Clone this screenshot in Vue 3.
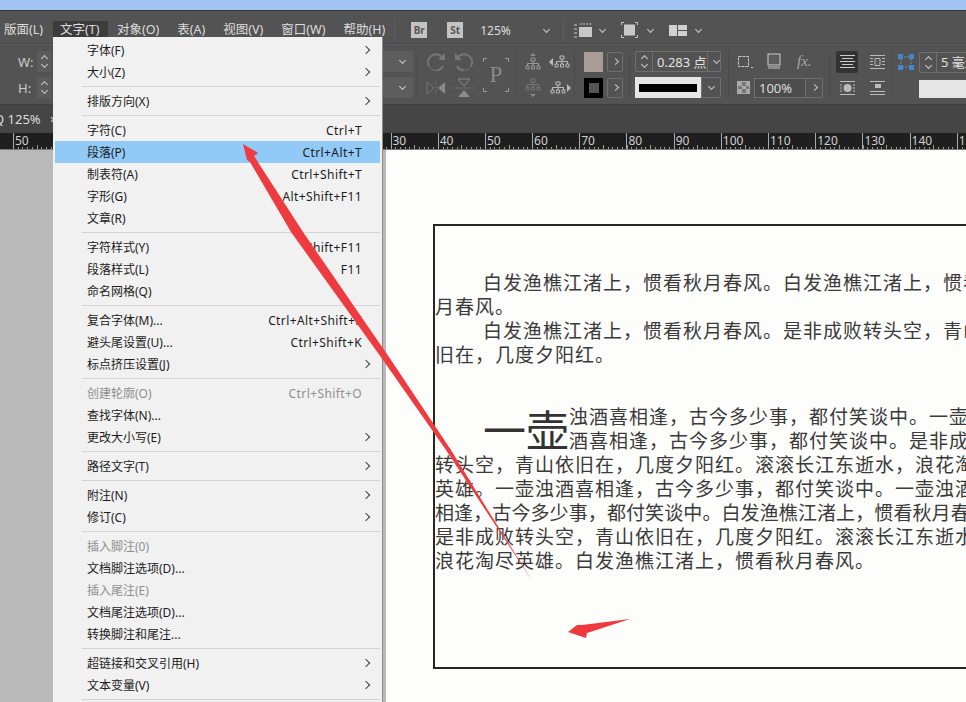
<template>
  <div class="app">
    <div class="title-strip"></div>

    <div class="menubar">
      <span class="mb-item first">版面(L)</span>
      <span class="mb-item active">文字(T)</span>
      <span class="mb-item">对象(O)</span>
      <span class="mb-item">表(A)</span>
      <span class="mb-item">视图(V)</span>
      <span class="mb-item">窗口(W)</span>
      <span class="mb-item">帮助(H)</span>
      <i class="vline bar-sep"></i>
      <span class="badge br">Br</span>
      <span class="badge st">St</span>
      <span class="zoom-val">125%</span>
      <i class="chev zoom-chev"></i>
      <i class="vline bar-sep2"></i>
      <svg class="bar-ic" width="20" height="16" viewBox="0 0 20 16">
        <rect x="6" y="5" width="13" height="10" fill="#c8c8c8" />
        <path d="M1 3h3M1 7h3M1 11h3M1 15h3M8 1v2M11 1v2M14 1v2M17 1v2" stroke="#c8c8c8" fill="none" />
      </svg>
      <i class="chev"></i>
      <svg class="bar-ic gap-a" width="17" height="16" viewBox="0 0 17 16">
        <rect x="3" y="2.500" width="11" height="11" fill="#c8c8c8" />
        <path d="M.5 3V.5H3M14 .5h2.500V3M.5 13v2.500H3M14 15.500h2.500V13" stroke="#c8c8c8" fill="none" />
      </svg>
      <i class="chev"></i>
      <svg class="bar-ic gap-b" width="18" height="13" viewBox="0 0 18 13">
        <rect x="0" y="1" width="8" height="11" fill="#d0d0d0" />
        <rect x="9" y="1" width="9" height="5" fill="#d0d0d0" />
        <rect x="9" y="7" width="9" height="5" fill="#d0d0d0" />
      </svg>
      <i class="chev"></i>
    </div>

    <div class="panel">
      <div class="grp g-left">
        <div class="wh-row"><span class="wh">W:</span><span class="spin"><i class="chev up"></i><i class="chev"></i></span></div>
        <div class="wh-row"><span class="wh">H:</span><span class="spin"><i class="chev up"></i><i class="chev"></i></span></div>
      </div>

      <div class="grp g-dd">
        <span class="dd-chip"><i class="chev"></i></span>
        <span class="dd-chip"><i class="chev"></i></span>
      </div>
      <i class="vline psep"></i>

      <div class="grp g-rot">
        <svg width="24" height="20" viewBox="0 0 24 20" class="ic">
          <path d="M18 5a8 8 0 1 0 1 9" fill="none" stroke="#777" stroke-width="2" stroke-dasharray="24 2 1 1 1 1 1 1" />
          <path d="M21 1v7h-7z" fill="#777" />
        </svg>
        <svg width="24" height="20" viewBox="0 0 24 20" class="ic">
          <path d="M6 5a8 8 0 1 1-1 9" fill="none" stroke="#777" stroke-width="2" stroke-dasharray="24 2 1 1 1 1 1 1" />
          <path d="M3 1v7h7z" fill="#777" />
        </svg>
        <svg width="20" height="16" viewBox="0 0 20 16" class="ic">
          <path d="M1 2l7 6-7 6z" fill="none" stroke="#777" />
          <path d="M19 2l-7 6 7 6z" fill="#8a8a8a" />
          <path d="M10 1v14" stroke="#777" stroke-dasharray="1 1" />
        </svg>
        <svg width="20" height="20" viewBox="0 0 20 20" class="ic">
          <path d="M4 1h12l-6 7z" fill="none" stroke="#8a8a8a" />
          <path d="M4 19h12l-6-7z" fill="#8a8a8a" />
          <path d="M0 10h20" stroke="#888" stroke-dasharray="1 1" />
        </svg>
      </div>

      <div class="grp g-proxy">
        <span class="proxy"><i class="cn tl"></i><i class="cn tr"></i><i class="cn bl"></i><i class="cn br2"></i>P</span>
      </div>
      <i class="vline psep"></i>

      <div class="grp g-org">
        <svg width="16" height="20" viewBox="0 0 16 20" class="ic">
          <path d="M5 4l3-3 3 3z" fill="#888" />
          <path d="M6 6h4v3H6zM1 14h3v3H1zM6.500 14h3v3h-3zM12 14h3v3h-3zM8 9v5M2.500 14v-2.500h11V14" fill="none" stroke="#999" />
        </svg>
        <svg width="24" height="16" viewBox="0 0 24 16" class="ic">
          <path d="M1 8l4-4v8z" fill="#bbb" />
          <path d="M12 2h4v3h-4zM7 10h3v3H7zM12.500 10h3v3h-3zM18 10h3v3h-3zM14 5v5M8.500 10V7.500h11V10" fill="none" stroke="#bbb" />
        </svg>
        <svg width="16" height="20" viewBox="0 0 16 20" class="ic">
          <path d="M5 16l3 3 3-3z" fill="#888" />
          <path d="M6 1h4v3H6zM1 9h3v3H1zM6.500 9h3v3h-3zM12 9h3v3h-3zM8 4v5M2.500 9V6.500h11V9" fill="none" stroke="#777" />
        </svg>
        <svg width="24" height="16" viewBox="0 0 24 16" class="ic">
          <path d="M23 8l-4-4v8z" fill="#bbb" />
          <path d="M8 2h4v3H8zM3 10h3v3H3zM8.500 10h3v3h-3zM14 10h3v3h-3zM10 5v5M4.500 10V7.500h11V10" fill="none" stroke="#bbb" />
        </svg>
      </div>
      <i class="vline psep"></i>

      <div class="grp g-swatch">
        <span class="sw fill"></span>
        <span class="arrow-btn"><i class="chev right"></i></span>
        <span class="sw stroke"><i></i></span>
        <span class="arrow-btn"><i class="chev right"></i></span>
      </div>
      <i class="vline psep"></i>

      <div class="grp g-stroke">
        <div class="field">
          <span class="spin-box"><i class="chev up"></i><i class="chev"></i></span>
          <span class="field-val">0.283 点</span>
          <span class="field-end"><i class="chev"></i></span>
        </div>
        <div class="field plain">
          <span class="line-sample"><i></i></span>
          <span class="field-end"><i class="chev"></i></span>
        </div>
      </div>
      <i class="vline psep"></i>

      <div class="grp g-fx">
        <div class="fx-row">
          <svg width="16" height="14" viewBox="0 0 16 14">
            <rect x="1.500" y="1.500" width="10" height="10" fill="none" stroke="#ccc" stroke-dasharray="3 1" />
            <path d="M14 12h2v1h-2z" fill="#ccc" />
          </svg>
          <svg class="fx-gap" width="14" height="17" viewBox="0 0 14 17">
            <rect x="1" y="1" width="12" height="11" fill="#5c5c5c" stroke="#ccc" />
            <rect x="1" y="12" width="12" height="4" fill="#8b8b8b" />
          </svg>
          <span class="fx-text">fx.</span>
        </div>
        <div class="fx-row second">
          <svg width="13" height="13" viewBox="0 0 13 13">
            <rect x=".5" y=".5" width="12" height="12" fill="#777" stroke="#aaa" />
            <path d="M1 1h4v4H1zM9 1h3v4H9zM5 5h4v3H5zM1 8h4v4H1zM9 8h3v4H9z" fill="#aaa" />
          </svg>
          <span class="pct">100%</span>
          <span class="arrow-btn joined"><i class="chev right"></i></span>
        </div>
      </div>
      <i class="vline psep"></i>

      <div class="grp g-align">
        <span class="al-cell on">
          <svg width="15" height="14" viewBox="0 0 15 14"><path d="M0 .5h15M2 3.500h11M0 6.500h15M2 9.500h11M0 12.500h15" stroke="#ccc" fill="none" /></svg>
        </span>
        <span class="al-cell">
          <svg width="15" height="14" viewBox="0 0 15 14"><path d="M0 .5h15M0 13.500h15M5 3.500h5v7H5zM0 3.500h3M0 6.500h3M0 9.500h3M12 3.500h3M12 6.500h3M12 9.500h3" stroke="#bbb" fill="none" /></svg>
        </span>
        <span class="al-cell">
          <svg width="15" height="14" viewBox="0 0 15 14"><circle cx="7.500" cy="7" r="4" fill="#bbb" /><path d="M0 .5h15M0 13.500h15M0 4h2M13 4h2M0 7h2M13 7h2M0 10h2M13 10h2" stroke="#bbb" fill="none" /></svg>
        </span>
        <span class="al-cell">
          <svg width="15" height="14" viewBox="0 0 15 14"><path d="M0 .5h15M0 13.500h15M0 10.500h15" stroke="#bbb" fill="none" /><rect x="5" y="3" width="6" height="4" fill="#bbb" /></svg>
        </span>
      </div>
      <i class="vline psep"></i>

      <div class="grp g-wrap">
        <div class="wrap-row">
          <svg width="16" height="16" viewBox="0 0 16 16">
            <path d="M3 3h10v10H3z" fill="none" stroke="#888" stroke-dasharray="2 1" />
            <path d="M0 0h5v5H0zM11 0h5v5h-5zM0 11h5v5H0zM11 11h5v5h-5z" fill="#3f86d6" />
          </svg>
          <div class="field open">
            <span class="spin-box"><i class="chev up"></i><i class="chev"></i></span>
            <span class="field-val">5 毫米</span>
          </div>
        </div>
        <span class="wrap-sample"></span>
      </div>
    </div>

    <div class="tabstrip">
      <span class="tab">Q 125%<em>×</em></span>
    </div>

    <div class="ruler">
      <span v-for="(n, i) in rulerMarks" :key="i" class="tick-cell">{{ n }}</span>
    </div>

    <div class="canvas">
      <div class="pasteboard"></div>
      <div class="board">
        <div class="frame">
          <p class="ln indent">白发渔樵江渚上，惯看秋月春风。白发渔樵江渚上，惯看秋</p>
          <p class="ln">月春风。</p>
          <p class="ln indent">白发渔樵江渚上，惯看秋月春风。是非成败转头空，青山依</p>
          <p class="ln">旧在，几度夕阳红。</p>
          <div class="drop">
            <span class="cap">一壶</span>
            <div>
              <p class="ln">浊酒喜相逢，古今多少事，都付笑谈中。一壶浊</p>
              <p class="ln">酒喜相逢，古今多少事，都付笑谈中。是非成败</p>
            </div>
          </div>
          <p class="ln">转头空，青山依旧在，几度夕阳红。滚滚长江东逝水，浪花淘尽</p>
          <p class="ln">英雄。一壶浊酒喜相逢，古今多少事，都付笑谈中。一壶浊酒喜</p>
          <p class="ln tight">相逢，古今多少事，都付笑谈中。白发渔樵江渚上，惯看秋月春</p>
          <p class="ln">是非成败转头空，青山依旧在，几度夕阳红。滚滚长江东逝水，</p>
          <p class="ln">浪花淘尽英雄。白发渔樵江渚上，惯看秋月春风。</p>
        </div>
      </div>
    </div>

    <!-- 下拉菜单 -->
    <div class="menu">
      <template v-for="(group, g) in menuGroups" :key="g">
        <div
          v-for="item in group"
          :key="item.label"
          class="menu-item"
          :class="{ hover: item.hover, off: item.off }"
        >
          <span>{{ item.label }}</span>
          <span class="keys">{{ item.keys }}</span>
          <i v-if="item.sub" class="chev right dark"></i>
        </div>
        <div class="menu-sep"></div>
      </template>
    </div>

    <!-- 标注箭头 -->
    <svg class="marks" width="966" height="702" viewBox="0 0 966 702">
      <polygon
        fill="#ee3b40"
        points="243,144 258,153 254,156 303,232 391,360 451,450 494,520 533,582 492,520 446,450 383,360 291,232 250,162 247,160"
      />
      <polygon fill="#f0393c" points="630,619 582,625 577,625 568,632 586,638 587,633" />
    </svg>
  </div>
</template>

<script setup>
const rulerMarks = [50, 40, 30, 20, 10, 0, 10, 20, 30, 40, 50, 60, 70, 80, 90, 100, 110, 120, 130, 140, 150]

const menuGroups = [
  [
    { label: '字体(F)', sub: true },
    { label: '大小(Z)', sub: true }
  ],
  [{ label: '排版方向(X)', sub: true }],
  [
    { label: '字符(C)', keys: 'Ctrl+T' },
    { label: '段落(P)', keys: 'Ctrl+Alt+T', hover: true },
    { label: '制表符(A)', keys: 'Ctrl+Shift+T' },
    { label: '字形(G)', keys: 'Alt+Shift+F11' },
    { label: '文章(R)' }
  ],
  [
    { label: '字符样式(Y)', keys: 'Shift+F11' },
    { label: '段落样式(L)', keys: 'F11' },
    { label: '命名网格(Q)' }
  ],
  [
    { label: '复合字体(M)...', keys: 'Ctrl+Alt+Shift+F' },
    { label: '避头尾设置(U)...', keys: 'Ctrl+Shift+K' },
    { label: '标点挤压设置(J)', sub: true }
  ],
  [
    { label: '创建轮廓(O)', keys: 'Ctrl+Shift+O', off: true },
    { label: '查找字体(N)...' },
    { label: '更改大小写(E)', sub: true }
  ],
  [{ label: '路径文字(T)', sub: true }],
  [
    { label: '附注(N)', sub: true },
    { label: '修订(C)', sub: true }
  ],
  [
    { label: '插入脚注(0)', off: true },
    { label: '文档脚注选项(D)...' },
    { label: '插入尾注(E)', off: true },
    { label: '文档尾注选项(D)...' },
    { label: '转换脚注和尾注...' }
  ],
  [
    { label: '超链接和交叉引用(H)', sub: true },
    { label: '文本变量(V)', sub: true }
  ]
]
</script>

<style>
html,
body {
  margin: 0;
  background: #fff;
}
</style>

<style scoped>
.app {
  position: relative;
  width: 966px;
  height: 702px;
  overflow: hidden;
  display: flex;
  flex-direction: column;
  font-family: "Noto Sans", "Noto Sans CJK SC", sans-serif;
  font-size: 12px;
  color: #ddd;
  background: #535353;
}

.title-strip {
  height: 10px;
  background: #a2c3f4;
  border-bottom: 1px solid #333;
  flex: none;
}

/* 菜单栏 */
.menubar {
  height: 33px;
  flex: none;
  display: flex;
  align-items: center;
  box-sizing: border-box;
  padding-top: 6px;
  border-bottom: 1px solid #484848;
}

.mb-item {
  height: 18px;
  line-height: 18px;
  margin-left: 18px;
  font-size: 12.500px;
  white-space: nowrap;
}

.mb-item.first {
  margin-left: 4px;
}

.mb-item.active {
  background: #3c3c3c;
  width: 55px;
  padding-left: 7px;
  box-sizing: border-box;
  margin-left: 10px;
  margin-right: -9px;
}

.vline {
  display: block;
  width: 1px;
  background: #5e5e5e;
  flex: none;
}

.bar-sep {
  height: 22px;
  margin: 0 16px 0 9px;
}

.badge {
  width: 16px;
  height: 16px;
  background: #c4c4c4;
  color: #555;
  font-size: 10px;
  font-weight: 700;
  line-height: 16px;
  text-align: center;
}

.badge.st {
  margin-left: 20px;
}

.zoom-val {
  margin-left: 17px;
  width: 64px;
}

.zoom-chev {
  margin-right: 14px;
}

.bar-sep2 {
  height: 22px;
  margin-right: 9px;
}

.bar-ic {
  flex: none;
  margin-right: 7px;
}

.gap-a {
  margin-left: 16px;
  margin-right: 10px;
}

.gap-b {
  margin-left: 16px;
  margin-right: 9px;
}

/* 小箭头 */
.chev {
  display: block;
  flex: none;
  width: 5px;
  height: 5px;
  box-sizing: border-box;
  border-right: 1px solid #c8c8c8;
  border-bottom: 1px solid #c8c8c8;
  transform: translateY(-1px) rotate(45deg);
}

.chev.up {
  transform: translateY(1px) rotate(225deg);
}

.chev.right {
  transform: rotate(-45deg);
}

.chev.dark {
  width: 6px;
  height: 6px;
  border-color: #444;
  margin-left: 4px;
}

/* 控制面板 */
.panel {
  height: 60px;
  flex: none;
  display: flex;
  align-items: center;
  border-top: 1px solid #5d5d5d;
  box-sizing: border-box;
}

.psep {
  height: 48px;
  background: #4b4b4b;
}

.grp {
  flex: none;
  box-sizing: border-box;
}

.g-left {
  width: 383px;
  display: flex;
  flex-direction: column;
  gap: 5px;
}

.wh-row {
  display: flex;
  align-items: center;
  height: 21px;
  padding-left: 18px;
}

.wh {
  width: 19px;
  font-size: 13px;
  color: #ccc;
}

.spin {
  width: 14px;
  height: 21px;
  display: flex;
  flex-direction: column;
  align-items: center;
  justify-content: center;
  gap: 3px;
  background: #5b5b5b;
}

.g-dd {
  width: 34px;
  display: flex;
  flex-direction: column;
  gap: 5px;
}

.dd-chip {
  width: 30px;
  height: 21px;
  background: #5d5d5d;
  display: flex;
  align-items: center;
  justify-content: flex-end;
  padding-right: 8px;
  box-sizing: border-box;
}

.g-rot {
  width: 62px;
  display: grid;
  grid-template-columns: 28px 28px;
  row-gap: 6px;
  justify-items: center;
  align-items: center;
  padding-left: 4px;
}

.ic {
  display: block;
}

.g-proxy {
  width: 36px;
  display: flex;
  justify-content: flex-start;
  padding-left: 3px;
}

.proxy {
  position: relative;
  width: 26px;
  height: 34px;
  display: flex;
  align-items: center;
  justify-content: center;
  font-family: "Liberation Serif", serif;
  font-size: 23px;
  color: #8a8a8a;
}

.cn {
  position: absolute;
  width: 3px;
  height: 3px;
  border: 0 solid #999;
}

.cn.tl {
  left: 0;
  top: 0;
  border-width: 1px 0 0 1px;
}

.cn.tr {
  right: 0;
  top: 0;
  border-width: 1px 1px 0 0;
}

.cn.bl {
  left: 0;
  bottom: 0;
  border-width: 0 0 1px 1px;
}

.cn.br2 {
  right: 0;
  bottom: 0;
  border-width: 0 1px 1px 0;
}

.g-org {
  width: 57px;
  display: grid;
  grid-template-columns: 27px 27px;
  row-gap: 6px;
  justify-items: center;
  align-items: center;
  padding-left: 2px;
}

.g-swatch {
  width: 54px;
  display: grid;
  grid-template-columns: 19px 16px;
  column-gap: 4px;
  row-gap: 6px;
  padding-left: 9px;
  align-items: center;
}

.sw {
  width: 19px;
  height: 20px;
  display: flex;
  align-items: center;
  justify-content: center;
}

.sw.fill {
  background: #a99c94;
}

.sw.stroke {
  background: #000;
}

.sw.stroke i {
  width: 10px;
  height: 10px;
  background: #555;
}

.arrow-btn {
  width: 16px;
  height: 20px;
  box-sizing: border-box;
  border: 1px solid #6f6f6f;
  border-radius: 2px;
  display: flex;
  align-items: center;
  justify-content: center;
}

.g-stroke {
  width: 98px;
  padding-left: 5px;
  display: flex;
  flex-direction: column;
  gap: 5px;
}

.field {
  display: flex;
  width: 86px;
  height: 21px;
  box-sizing: border-box;
  border: 1px solid #6f6f6f;
  border-radius: 2px;
  align-items: center;
}

.field.plain {
  border-color: #6f6f6f;
}

.spin-box {
  width: 16px;
  height: 100%;
  flex: none;
  display: flex;
  flex-direction: column;
  align-items: center;
  justify-content: center;
  gap: 3px;
  border-right: 1px solid #6f6f6f;
}

.field-val {
  flex: 1;
  padding-left: 4px;
  font-size: 13px;
  line-height: 18px;
  white-space: nowrap;
  color: #e2e2e2;
}

.field-end {
  width: 18px;
  height: 100%;
  flex: none;
  display: flex;
  align-items: center;
  justify-content: center;
  border-left: 1px solid #6f6f6f;
}

.line-sample {
  flex: 1;
  height: 21px;
  margin: -1px 0 -1px -1px;
  background: #e6e6e6;
  display: flex;
  align-items: center;
  padding: 0 4px;
}

.line-sample i {
  display: block;
  flex: 1;
  height: 8px;
  background: #000;
}

.g-fx {
  width: 100px;
  padding-left: 8px;
  display: flex;
  flex-direction: column;
  gap: 6px;
}

.fx-row {
  height: 20px;
  display: flex;
  align-items: center;
}

.fx-gap {
  margin-left: 14px;
}

.fx-text {
  margin-left: 16px;
  font-family: "Liberation Serif", serif;
  font-style: italic;
  font-size: 15px;
  color: #aaa;
}

.fx-row.second svg {
  flex: none;
}

.pct {
  width: 51px;
  height: 20px;
  margin-left: 4px;
  box-sizing: border-box;
  border: 1px solid #6f6f6f;
  border-right: 0;
  background: #4d4d4d;
  padding-left: 4px;
  font-size: 13px;
  line-height: 18px;
}

.arrow-btn.joined {
  width: 18px;
  border-radius: 0 2px 2px 0;
}

.g-align {
  width: 62px;
  padding-left: 6px;
  display: grid;
  grid-template-columns: 22px 22px;
  column-gap: 8px;
  row-gap: 4px;
}

.al-cell {
  height: 22px;
  display: flex;
  align-items: center;
  justify-content: center;
}

.al-cell.on {
  background: #333;
  border-radius: 2px;
}

.g-wrap {
  padding-left: 5px;
  display: flex;
  flex-direction: column;
  gap: 5px;
}

.wrap-row {
  display: flex;
  align-items: center;
  gap: 5px;
}

.field.open {
  width: 60px;
  border-right: 0;
}

.wrap-sample {
  display: block;
  width: 60px;
  height: 20px;
  margin-left: 21px;
  background: #e6e6e6;
  border-top: 2px solid #555;
  box-sizing: border-box;
}

/* 标签和标尺 */
.tabstrip {
  height: 29px;
  flex: none;
  background: #454545;
  box-sizing: border-box;
  border-top: 1px solid #3d3d3d;
}

.tab {
  display: block;
  margin-left: -6px;
  width: 60px;
  font-size: 13px;
  line-height: 28px;
  white-space: nowrap;
  color: #ddd;
}

.tab em {
  font-style: normal;
  margin-left: 9px;
}

.ruler {
  height: 16px;
  flex: none;
  display: flex;
  padding-left: 13px;
  background:
    repeating-linear-gradient(90deg, #9a9a9a 0 1px, transparent 1px 23.600px) 13px 100% / 100% 4px no-repeat,
    repeating-linear-gradient(90deg, #9a9a9a 0 1px, transparent 1px 4.720px) 13px 100% / 100% 2px no-repeat,
    #1f1f1f;
  border-bottom: 1px solid #777;
}

.tick-cell {
  flex: 0 0 47.200px;
  box-sizing: border-box;
  border-left: 1px solid #aaa;
  padding-left: 1px;
  font-size: 12px;
  line-height: 15px;
  color: #cfcfcf;
}

/* 画布 */
.canvas {
  flex: 1;
  display: flex;
  min-height: 0;
  background: #fdfdfb;
}

.pasteboard {
  width: 386px;
  flex: none;
  background: #b9b9b9;
}

.board {
  flex: 1;
  min-width: 0;
  padding: 74px 0 0 47px;
}

.frame {
  width: 620px;
  height: 445px;
  box-sizing: border-box;
  border: 2px solid #262626;
  padding-top: 44px;
  font-family: "Noto Sans CJK SC", sans-serif;
  color: #3a3a3a;
}

.ln {
  margin: 0;
  font-size: 19px;
  line-height: 24px;
  letter-spacing: 1px;
  white-space: nowrap;
}

.ln.indent {
  padding-left: 48px;
}

.ln.tight {
  letter-spacing: .1px;
}

.drop {
  display: flex;
  margin-top: 38px;
  padding-left: 48px;
  height: 48px;
}

.cap {
  width: 86px;
  flex: none;
  font-size: 43px;
  line-height: 48px;
  white-space: nowrap;
  color: #333;
}

/* 菜单 */
.menu {
  position: absolute;
  left: 53px;
  top: 37px;
  width: 330px;
  box-sizing: border-box;
  padding: 2px 2px 0 2px;
  background: #f1f1f1;
  border-right: 1px solid #8a8a8a;
  color: #1c1c1c;
}

.menu-item {
  height: 22px;
  display: flex;
  align-items: center;
  padding: 0 11px 0 32px;
  white-space: nowrap;
}

.menu-item.hover {
  background: #91c9f7;
}

.menu-item.off {
  color: #8f8f8f;
}

.keys {
  margin-left: auto;
  margin-right: 7px;
  letter-spacing: .4px;
}

.keys + .chev {
  margin-left: 0;
}

.menu-sep {
  height: 1px;
  margin: 3px 0 3px 27px;
  background: #d4d4d4;
}

.marks {
  position: absolute;
  left: 0;
  top: 0;
  pointer-events: none;
}
</style>
